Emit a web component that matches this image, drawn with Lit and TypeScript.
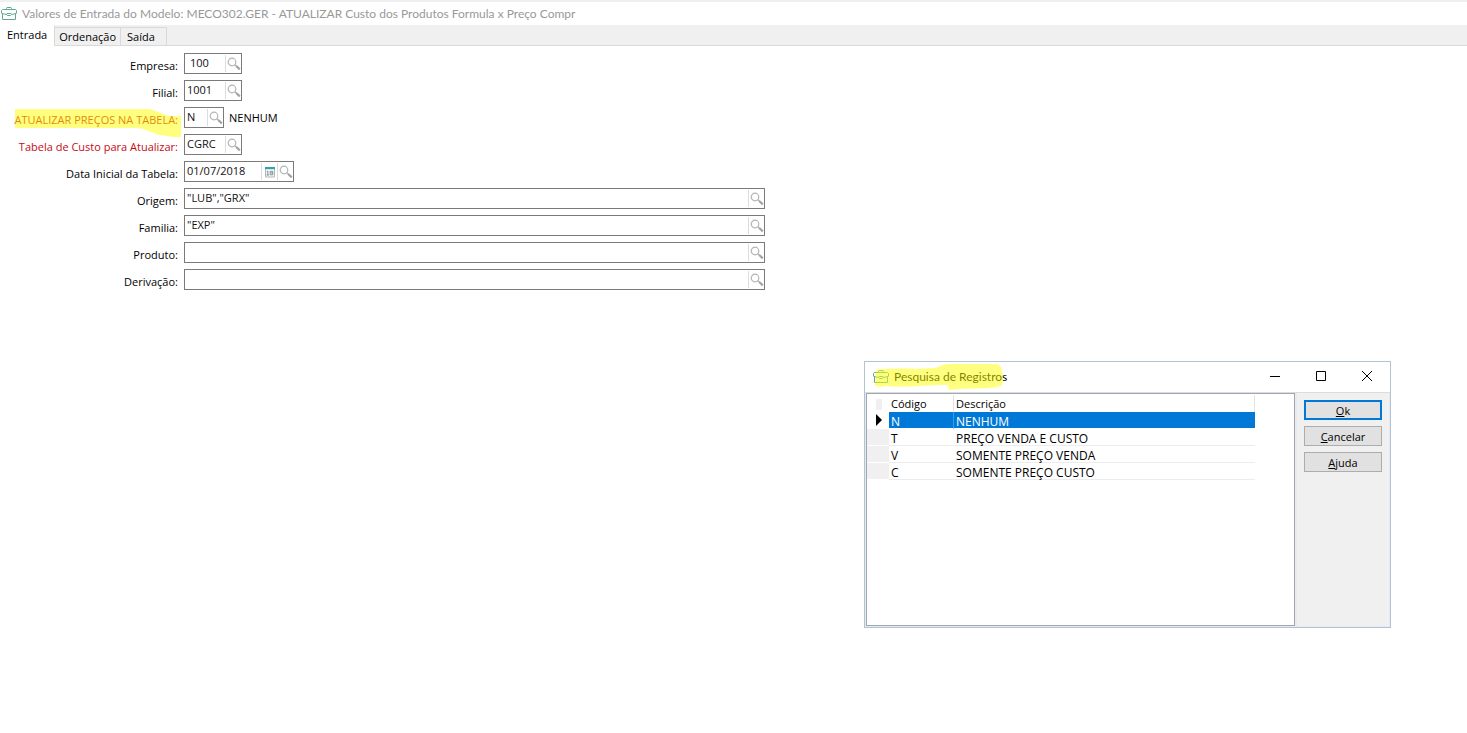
import { LitElement, html, svg, css, nothing } from "lit";
import { customElement, property, state } from "lit/decorators.js";

interface Field {
  id: string;
  label: string;
  value: string;
  size: string;
  alert?: boolean;
  marked?: boolean;
  calendar?: boolean;
  indent?: boolean;
  note?: string;
}

const FIELDS: Field[] = [
  { id: "empresa", label: "Empresa:", value: "100", size: "code", indent: true },
  { id: "filial", label: "Filial:", value: "1001", size: "code" },
  { id: "atualizar", label: "ATUALIZAR PREÇOS NA TABELA:", value: "N", size: "flag", alert: true, marked: true, note: "NENHUM" },
  { id: "tabela", label: "Tabela de Custo para Atualizar:", value: "CGRC", size: "code", alert: true },
  { id: "data", label: "Data Inicial da Tabela:", value: "01/07/2018", size: "date", calendar: true },
  { id: "origem", label: "Origem:", value: '"LUB","GRX"', size: "wide" },
  { id: "familia", label: "Familia:", value: '"EXP"', size: "wide" },
  { id: "produto", label: "Produto:", value: "", size: "wide" },
  { id: "derivacao", label: "Derivação:", value: "", size: "wide" },
];

const RECORDS = [
  { code: "N", text: "NENHUM" },
  { code: "T", text: "PREÇO VENDA E CUSTO" },
  { code: "V", text: "SOMENTE PREÇO VENDA" },
  { code: "C", text: "SOMENTE PREÇO CUSTO" },
];

const briefcase = html`<svg width="16" height="14" viewBox="0 0 16 14" fill="none" stroke="#62a893" aria-hidden="true">
  <path d="M5.5 3V1.5L6 .5H10L10.5 1.5V3" />
  <path d="M1.5 2.5H14.5L15.5 3.5V6L14.5 7V12.5H1.5V7L.5 6V3.5Z" />
  <path d="M1 6.5L5.5 7.5M10.5 7.5L15 6.5" />
  <path d="M6 6.5H10L10.5 7.5L9.5 8.5H6.5L5.5 7.5Z" />
</svg>`;

const lens = html`<svg width="14" height="14" viewBox="0 0 14 14" fill="none" aria-hidden="true">
  <circle cx="5" cy="5" r="3.8" stroke="#b0b6b6" stroke-width="1.2" />
  <path d="M7.6 7.6L9.6 9.2" stroke="#b5b5b5" stroke-width="1.4" />
  <path d="M9.2 9L12.8 12.4" stroke="#a3a3a3" stroke-width="2.2" />
</svg>`;

const calendar = html`<svg width="12" height="12" viewBox="0 0 12 12" aria-hidden="true">
  <path d="M1.5 1V11H10.5V1" fill="#f4f8f9" stroke="#a9bcc2" />
  <path d="M1 1H11V3.2H1Z" fill="#36a0ae" />
  <path d="M3.8 5V9.2M2.8 5.6H3.8M2.6 9H5M6.2 5.4H8.8V8.8H6.2ZM6.8 7H8.8" fill="none" stroke="#6f7d82" stroke-width="0.8" />
</svg>`;

@customElement("search-field")
export class SearchField extends LitElement {
  static styles = css`
    :host { display: contents; }
    .label { text-align: right; padding-top: 5px; line-height: 16px; white-space: nowrap; color: #000; }
    .alert { color: #c80a14; }
    .marked { position: relative; }
    .marker { position: absolute; right: -3px; top: -3px; pointer-events: none; }
    .entry { display: flex; align-items: center; gap: 5px; }
    .box { display: flex; box-sizing: border-box; height: 21px; border: 1px solid #7a7a7a; background: #fff; }
    .code { width: 58px; }
    .flag { width: 40px; }
    .date { width: 110px; }
    .wide { width: 100%; max-width: 581px; }
    .text { flex: 1; min-width: 0; box-sizing: border-box; border: 0; outline: 0; margin: 0; padding: 0 2px 2px; font: inherit; color: #111; background: none; }
    .indent { padding-left: 5px; }
    .icon { width: 16px; box-sizing: border-box; margin: 1px 0; padding: 0; border: 0; border-left: 1px solid #dcdcdc; background: none; display: flex; align-items: center; justify-content: center; }
    .note { line-height: 16px; padding-top: 1px; }
  `;
  @property({ attribute: false }) field!: Field;

  render() {
    const f = this.field;
    return html`
      <label class="label ${f.alert ? "alert" : ""}" for=${f.id}>
        <span class=${f.marked ? "marked" : ""}>${f.label}${f.marked
          ? html`<svg class="marker" width="166" height="29" viewBox="0 0 166 29" aria-hidden="true">
              <path d="M0 0H133C142 1 147 6 156 7H166V28C152 28 144 26 133 22C129 20 125 19 120 19H0Z" fill="#ffff00" fill-opacity="0.5" />
            </svg>`
          : nothing}</span>
      </label>
      <div class="entry">
        <div class="box ${f.size}">
          <input class="text ${f.indent ? "indent" : ""}" id=${f.id} type="text" .value=${f.value} />
          ${f.calendar ? html`<button class="icon" type="button" aria-label="Calendário">${calendar}</button>` : nothing}
          <button class="icon" type="button" aria-label="Pesquisar">${lens}</button>
        </div>
        ${f.note ? html`<span class="note">${f.note}</span>` : nothing}
      </div>
    `;
  }
}

@customElement("record-search")
export class RecordSearch extends LitElement {
  static styles = css`
    :host { display: flex; flex-direction: column; box-sizing: border-box; border: 1px solid #b0c4d4; background: #fff; }
    .bar { position: relative; display: flex; align-items: center; height: 30px; box-sizing: content-box; padding: 0 8px; border-bottom: 1px solid #d9dde2; }
    .name { flex: 1; margin: 0; padding: 0 0 0 5px; font-family: Lato, "Open Sans", sans-serif; font-size: 12px; font-weight: 400; line-height: 16px; }
    .marker { position: absolute; left: 9px; top: 1px; pointer-events: none; }
    .controls { display: flex; }
    .control { width: 46px; height: 28px; padding: 0 0 2px; border: 0; background: none; display: flex; align-items: center; justify-content: center; }
    .control:last-child { margin-right: -8px; }
    .body { flex: 1; display: flex; padding: 0 1px 1px; background: #e4ebf2; min-height: 0; }
    .list { flex: 1; border: 1px solid #a5a5ad; background: #fff; padding-top: 1px; }
    .side { width: 78px; padding: 7px; margin-left: 2px; background: #f0f0f0; display: flex; flex-direction: column; gap: 6px; }
    .action { height: 20px; box-sizing: border-box; padding: 1px 0 0; border: 1px solid #adadad; background: #e1e1e1; font: inherit; color: #000; line-height: 16px; }
    .primary { border: 2px solid #0078d7; padding: 1px 0 0; }
    .grid { border-collapse: separate; border-spacing: 0; table-layout: fixed; width: 388px; font-size: 12px; }
    .mark { width: 22px; }
    .code { width: 65px; }
    .head, .cell { height: 17px; box-sizing: border-box; padding: 0 0 0 2px; text-align: left; font-weight: 400; line-height: 16px; white-space: nowrap; }
    .head { font-size: 11px; border-right: 1px solid #e2e2e2; }
    .cell { padding-top: 3px; line-height: 13px; border-bottom: 1px solid #ececec; }
    .gutter { padding: 0; border-bottom: 1px solid #fff; background: #f0f0f0; }
    .corner { padding: 1px 0 0 9px; }
    .stub { display: block; width: 6px; height: 11px; background: #f0f0f0; }
    .current .cell { background: #0078d7; color: #fff; border-bottom-color: #fff; }
    .current .gutter { background: #fff; }
    .current .first { border-right: 1px solid #3d9ae6; }
    .arrow { display: block; margin-left: 9px; }
  `;
  @state() private selected = 0;

  render() {
    return html`
      <div class="bar">
        ${briefcase}
        <h2 class="name">Pesquisa de Registros</h2>
        <svg class="marker" width="130" height="28" viewBox="0 0 130 28" aria-hidden="true">
          <path d="M2 7C20 4 40 7 60 5C66 4 68 1 76 1H122C127 2 128 5 128 9C130 14 129 21 127 23C113 27 95 24 75 27L74 22C50 22 30 25 12 23C6 24 2 24 1 22Z" fill="#ffff00" fill-opacity="0.5" />
        </svg>
        <div class="controls">
          <button class="control" type="button" aria-label="Minimizar"><svg width="10" height="10" viewBox="0 0 10 10"><path d="M0 5.5H10" stroke="#000" /></svg></button>
          <button class="control" type="button" aria-label="Maximizar"><svg width="10" height="10" viewBox="0 0 10 10"><path d="M.5 .5H9.5V9.5H.5Z" stroke="#000" fill="none" /></svg></button>
          <button class="control" type="button" aria-label="Fechar"><svg width="10" height="10" viewBox="0 0 10 10"><path d="M0 0L10 10M10 0L0 10" stroke="#000" /></svg></button>
        </div>
      </div>
      <div class="body">
        <div class="list">
          <table class="grid">
            <colgroup><col class="mark" /><col class="code" /><col /></colgroup>
            <thead>
              <tr>
                <td class="corner"><span class="stub"></span></td>
                <th class="head" scope="col">Código</th>
                <th class="head" scope="col">Descrição</th>
              </tr>
            </thead>
            <tbody>
              ${RECORDS.map(
                (r, i) => html`<tr class=${i === this.selected ? "current" : ""} @click=${() => (this.selected = i)}>
                  <td class="gutter">${i === this.selected
                    ? html`<svg class="arrow" width="6" height="12" viewBox="0 0 6 12" aria-hidden="true">${svg`<path d="M0 0L6 6L0 12Z" fill="#000" />`}</svg>`
                    : nothing}</td>
                  <td class="cell first">${r.code}</td>
                  <td class="cell">${r.text}</td>
                </tr>`
              )}
            </tbody>
          </table>
        </div>
        <div class="side">
          <button class="action primary" type="button"><u>O</u>k</button>
          <button class="action" type="button"><u>C</u>ancelar</button>
          <button class="action" type="button"><u>A</u>juda</button>
        </div>
      </div>
    `;
  }
}

@customElement("app-root")
export class AppRoot extends LitElement {
  static styles = css`
    :host { display: block; position: relative; min-height: 100vh; background: #fff; color: #000; font-family: "Open Sans", "Noto Sans", sans-serif; font-size: 11px; overflow: hidden; }
    .title { display: flex; align-items: center; gap: 5px; height: 23px; padding-left: 1px; border-top: 2px solid #f0f0f0; color: #999; }
    .caption { margin: 0; font-family: Lato, "Open Sans", sans-serif; font-size: 12px; font-weight: 400; line-height: 16px; white-space: nowrap; }
    .tabs { display: flex; align-items: flex-end; height: 21px; box-sizing: border-box; background: #f0f0f0; border-bottom: 1px solid #d9d9d9; }
    .tab { height: 18px; box-sizing: border-box; margin: 0; padding: 1px 4px; border: 1px solid #d9d9d9; border-width: 1px 1px 0 0; background: #f0f0f0; color: #000; font: inherit; line-height: 15px; }
    .active { height: 21px; margin-bottom: -1px; padding: 0 7px 3px; background: #fff; border-top-color: #fff; }
    .last { padding: 1px 11px 1px 6px; }
    .form { display: grid; grid-template-columns: 178px minmax(0, 1fr); column-gap: 6px; row-gap: 6px; grid-auto-rows: 21px; padding-top: 7px; }
    .popup { position: absolute; left: 864px; top: 361px; width: 527px; height: 267px; }
  `;

  render() {
    return html`
      <header class="title">${briefcase}<h1 class="caption">Valores de Entrada do Modelo: MECO302.GER - ATUALIZAR Custo dos Produtos Formula x Preço Compr</h1></header>
      <nav class="tabs" role="tablist">
        <button class="tab active" type="button" role="tab" aria-selected="true">Entrada</button>
        <button class="tab" type="button" role="tab" aria-selected="false">Ordenação</button>
        <button class="tab last" type="button" role="tab" aria-selected="false">Saída</button>
      </nav>
      <form class="form">${FIELDS.map((f) => html`<search-field .field=${f}></search-field>`)}</form>
      <record-search class="popup" role="dialog" aria-label="Pesquisa de Registros"></record-search>
    `;
  }
}
